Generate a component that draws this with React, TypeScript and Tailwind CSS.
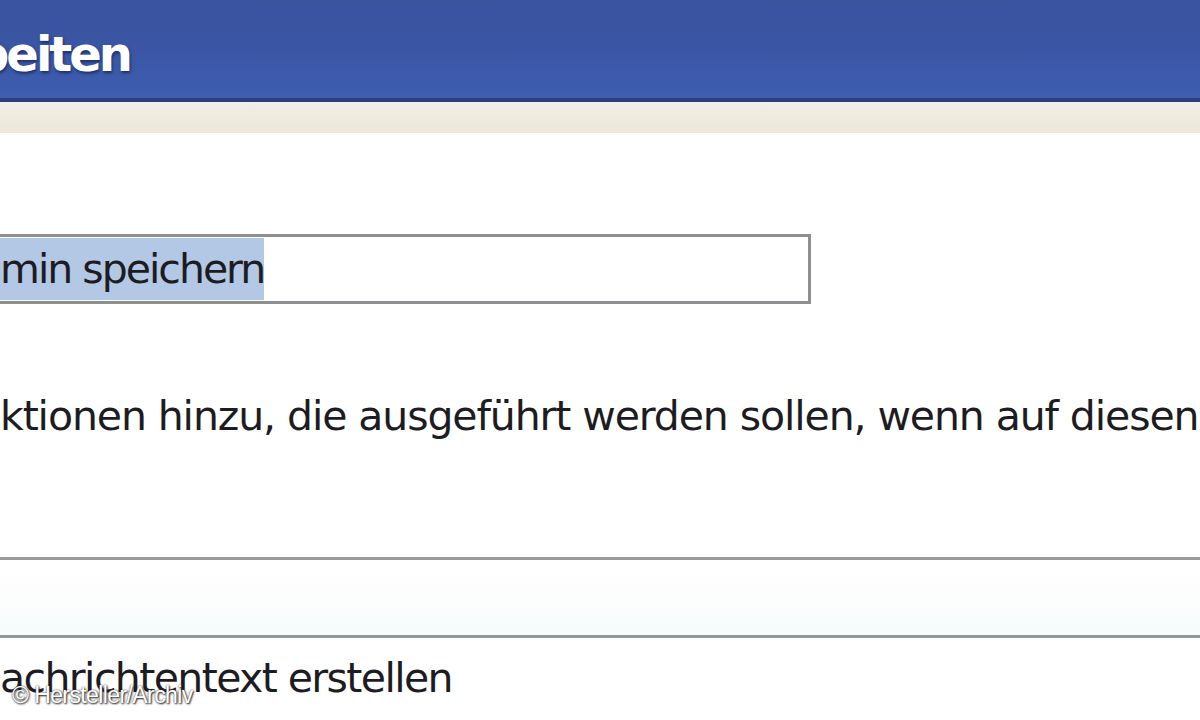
import React from "react";

const font = { fontFamily: '"DejaVu Sans", Tahoma, Verdana, sans-serif' };

export default function App() {
  return (
    <div className="relative w-[1200px] h-[720px] overflow-hidden bg-white" style={font}>
      {/* title bar */}
      <div className="h-[98px] bg-gradient-to-b from-[#3a54a0] via-[#3a55a3] to-[#3f5eb2] flex items-start">
        <span className="-ml-[25px] mt-[25px] text-[48px] leading-[58px] font-bold text-white tracking-[-3px] [text-shadow:1px_2px_3px_#1d2f6a]">
          beiten
        </span>
      </div>
      <div className="h-[4px] bg-[#2d3f78]" />
      <div className="h-[31px] bg-gradient-to-b from-[#f0efe8] to-[#ede8d6]" />

      {/* content */}
      <div className="pt-[101px] text-[#1c1c22]">
        <div className="w-[811px] h-[70px] border-[3px] border-l-0 border-[#8d8f93] flex items-center">
          <span className="bg-[#b3c8e5] h-[62px] flex items-center text-[41px] tracking-[-2px] leading-none">
            min speichern
          </span>
        </div>

        <div className="mt-[86px] text-[41px] leading-[52px] tracking-[-1.1px] whitespace-nowrap">
          ktionen hinzu, die ausgeführt werden sollen, wenn auf diesen
        </div>

        <div className="mt-[115px] h-[3px] bg-[#9a9a9a]" />
        <div className="h-[75px] bg-gradient-to-b from-white via-[#fdfdfd] to-[#f6fbfc]" />
        <div className="h-[3px] bg-[#8f999c]" />

        <div className="mt-[14px] text-[41px] leading-[52px] tracking-[-1.6px] whitespace-nowrap">
          achrichtentext erstellen
        </div>
      </div>

      {/* watermark */}
      <div
        className="absolute left-[12px] top-[681px] text-[23px] leading-[28px] text-white tracking-[-0.6px] [text-shadow:0_0_2px_#333,1px_1px_2px_#222]"
        style={{ fontFamily: '"Liberation Sans", Arial, sans-serif' }}
      >
        © Hersteller/Archiv
      </div>
    </div>
  );
}
